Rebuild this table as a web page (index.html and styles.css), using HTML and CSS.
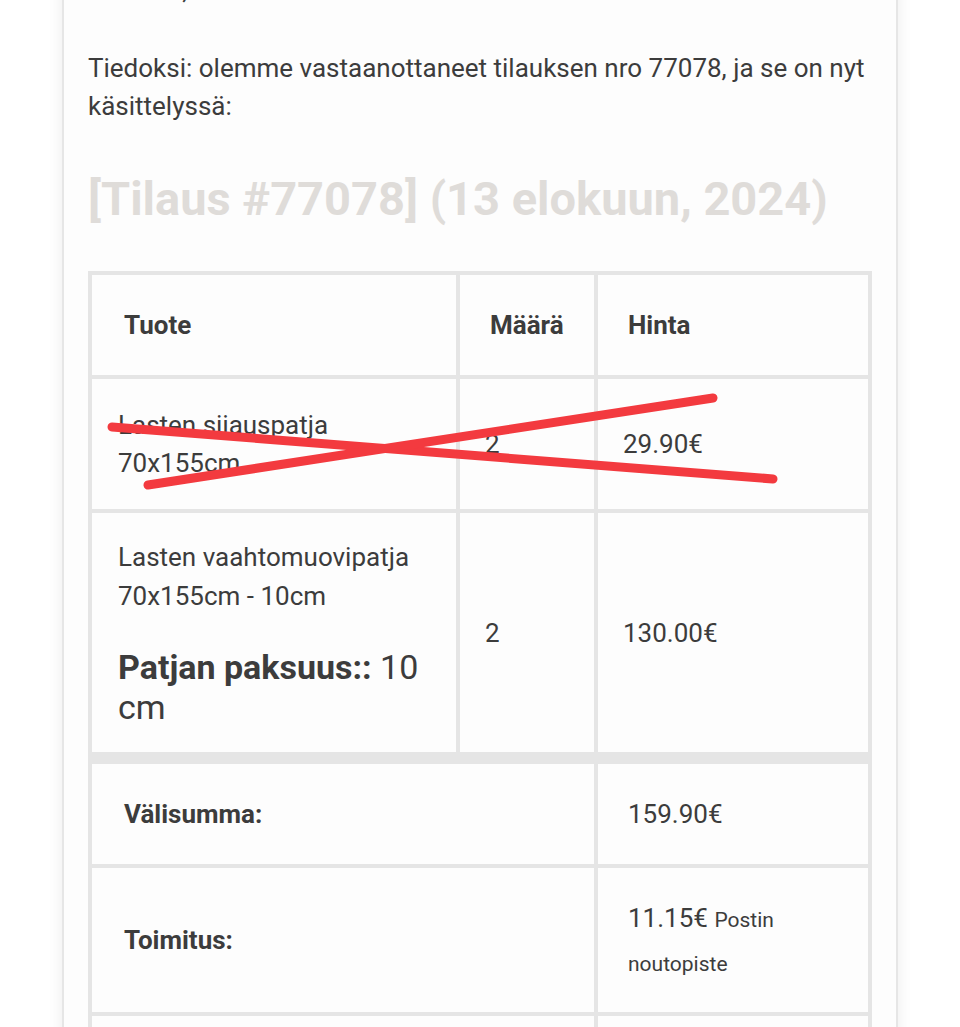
FILE: index.html
```html
<!DOCTYPE html>
<html lang="fi">
<head>
<meta charset="utf-8">
<title>Tilaus #77078</title>
<link rel="stylesheet" href="styles.css">
</head>
<body>
<div class="card">
  <p class="greeting">Hei Jani,</p>
  <p class="intro">Tiedoksi: olemme vastaanottaneet tilauksen nro 77078, ja se on nyt käsittelyssä:</p>
  <h2 class="order-title">[Tilaus #77078] (13 elokuun, 2024)</h2>
  <div class="order">
    <table class="order-table">
      <colgroup>
        <col class="col-product">
        <col class="col-qty">
        <col class="col-price">
      </colgroup>
      <thead>
        <tr>
          <th class="head">Tuote</th>
          <th class="head">Määrä</th>
          <th class="head">Hinta</th>
        </tr>
      </thead>
      <tbody>
        <tr>
          <td class="item">Lasten sijauspatja 70x155cm</td>
          <td class="item">2</td>
          <td class="item">29.90€</td>
        </tr>
        <tr>
          <td class="item item-tall">
            <div>Lasten vaahtomuovipatja 70x155cm - 10cm</div>
            <div class="meta"><strong>Patjan paksuus::</strong> 10 cm</div>
          </td>
          <td class="item">2</td>
          <td class="item">130.00€</td>
        </tr>
      </tbody>
      <tfoot>
        <tr class="first">
          <th class="foot" colspan="2">Välisumma:</th>
          <td class="foot-val">159.90€</td>
        </tr>
        <tr>
          <th class="foot" colspan="2">Toimitus:</th>
          <td class="foot-val ship">11.15€ <small class="ship-name">Postin noutopiste</small></td>
        </tr>
        <tr>
          <th class="foot" colspan="2">Maksutapa:</th>
          <td class="foot-val">Verkkopankki</td>
        </tr>
        <tr>
          <th class="foot" colspan="2">Yhteensä:</th>
          <td class="foot-val">171.05€</td>
        </tr>
      </tfoot>
    </table>
    <svg class="strike" width="700" height="120" viewBox="0 0 700 120" aria-hidden="true">
      <line x1="24" y1="16" x2="685" y2="68" />
      <line x1="60" y1="74" x2="625" y2="-13" />
    </svg>
  </div>
</div>
</body>
</html>
```
FILE: styles.css
```css
html, body {
  margin: 0;
  padding: 0;
  background: #ffffff;
}

body {
  font-family: Roboto, "Noto Sans", "Liberation Sans", sans-serif;
  color: #3c3c3c;
  font-size: 26px;
  line-height: 38px;
  overflow: hidden;
}

.card {
  margin: -31px 62px 0;
  padding: 0 24px 60px;
  background: #fdfdfd;
  border: 2px solid #e6e6e6;
  box-shadow: 0 0 14px rgba(0, 0, 0, 0.08);
}

.greeting {
  margin: 0 0 40px;
}

.intro {
  margin: 0;
}

.order-title {
  margin: 46px 0 44px;
  font-size: 47px;
  line-height: 56px;
  font-weight: 700;
  color: #dfdcd9;
}

.order {
  position: relative;
}

.order-table {
  width: 784px;
  border-collapse: separate;
  border-spacing: 0;
  border: 2px solid #e5e5e5;
  table-layout: fixed;
}

.col-product { width: 368px; }
.col-qty { width: 138px; }
.col-price { width: 274px; }

.order-table th,
.order-table td {
  border: 2px solid #e5e5e5;
  text-align: left;
  vertical-align: middle;
  font-size: 26px;
  line-height: 38px;
}

.head {
  padding: 31px 30px;
  font-weight: 700;
}

.head:first-child {
  padding-left: 32px;
}

.item {
  padding: 27px 25px;
}

.item:first-child {
  padding-left: 26px;
}

.item-tall {
  padding-top: 25px;
  padding-bottom: 25px;
  line-height: 39px !important;
}

.meta {
  margin-top: 31px;
  font-size: 34px;
  line-height: 40px;
}

.meta strong {
  font-weight: 700;
}

.foot {
  padding: 31px 32px;
  font-weight: 700;
}

.foot-val {
  padding: 31px 30px;
}

.first th,
.first td {
  border-top-width: 10px;
}

.ship {
  padding-top: 28px;
  padding-bottom: 28px;
  line-height: 44px !important;
}

.ship-name {
  font-size: 21px;
  line-height: 1;
}

.strike {
  position: absolute;
  left: 0;
  top: 140px;
  overflow: visible;
  pointer-events: none;
}

.strike line {
  stroke: #f33a3f;
  stroke-width: 9;
  stroke-linecap: round;
}
```
